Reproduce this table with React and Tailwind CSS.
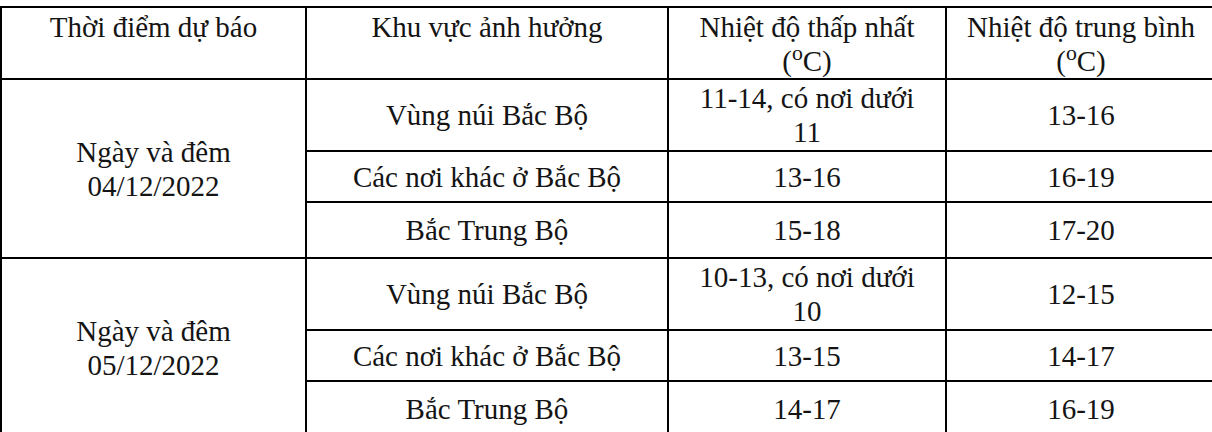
import React from 'react';

const GROUPS = [
  {
    date: '04/12/2022',
    rows: [
      { area: 'Vùng núi Bắc Bộ', min: ['11-14, có nơi dưới', '11'], avg: '13-16', h: 'h-[72px]' },
      { area: 'Các nơi khác ở Bắc Bộ', min: ['13-16'], avg: '16-19', h: 'h-[51px]' },
      { area: 'Bắc Trung Bộ', min: ['15-18'], avg: '17-20', h: 'h-[56px]' },
    ],
  },
  {
    date: '05/12/2022',
    rows: [
      { area: 'Vùng núi Bắc Bộ', min: ['10-13, có nơi dưới', '10'], avg: '12-15', h: 'h-[72px]' },
      { area: 'Các nơi khác ở Bắc Bộ', min: ['13-15'], avg: '14-17', h: 'h-[51px]' },
      { area: 'Bắc Trung Bộ', min: ['14-17'], avg: '16-19', h: 'h-[56px]' },
    ],
  },
];

const cell = 'border-2 border-black p-0 text-center align-middle font-normal';
const head = 'border-2 border-black px-0 pt-[2px] text-center align-top font-normal';

export default function App() {
  return (
    <div className="w-[1212px] h-[432px] overflow-hidden bg-white pt-[6px] font-['Liberation_Serif','Times_New_Roman',serif] text-[29px] leading-[34px] text-[#141414]">
      <table className="table-fixed border-collapse w-[1215px]">
        <colgroup>
          <col className="w-[305px]" />
          <col className="w-[362px]" />
          <col className="w-[278px]" />
          <col className="w-[270px]" />
        </colgroup>
        <thead>
          <tr className="h-[72px]">
            <th className={head}>Thời điểm dự báo</th>
            <th className={head}>Khu vực ảnh hưởng</th>
            <th className={head}>Nhiệt độ thấp nhất<br />(<sup>o</sup>C)</th>
            <th className={head}>Nhiệt độ trung bình<br />(<sup>o</sup>C)</th>
          </tr>
        </thead>
        <tbody>
          {GROUPS.map(g => g.rows.map((r, i) => (
            <tr key={g.date + i} className={r.h}>
              {i === 0 && (
                <td rowSpan={3} className={cell}>Ngày và đêm<br />{g.date}</td>
              )}
              <td className={cell}>{r.area}</td>
              <td className={cell}>
                {r.min.map((l, k) => <div key={k}>{l}</div>)}
              </td>
              <td className={cell}>{r.avg}</td>
            </tr>
          )))}
        </tbody>
      </table>
    </div>
  );
}
